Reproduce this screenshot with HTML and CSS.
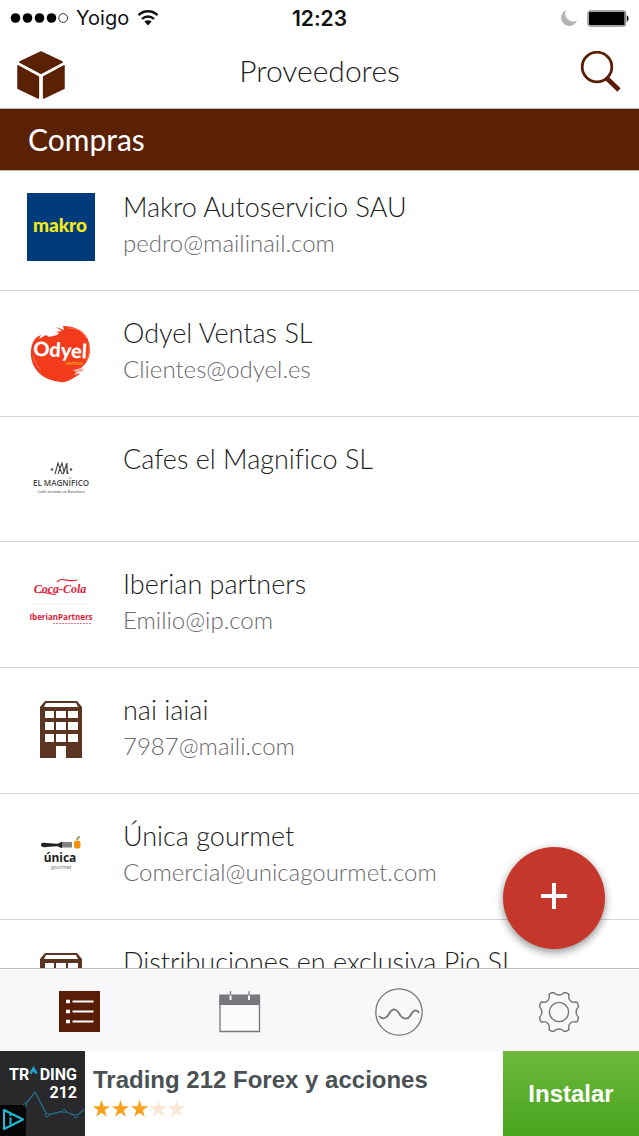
FILE: index.html
```html
<!DOCTYPE html>
<html lang="es">
<head>
<meta charset="utf-8">
<meta name="viewport" content="width=device-width, initial-scale=1">
<title>Proveedores</title>
<link rel="stylesheet" href="styles.css">
</head>
<body>
<div class="app">
  <div class="status">
    <div class="status-left">
      <svg class="signal" width="58" height="12" viewBox="0 0 58 12" aria-hidden="true"><circle cx="5.500" cy="6" r="4.800"/><circle cx="17.500" cy="6" r="4.800"/><circle cx="29.500" cy="6" r="4.800"/><circle cx="41.500" cy="6" r="4.800"/><circle cx="53.200" cy="6" r="4.400" fill="none" stroke="#333" stroke-width="1"/></svg>
      <span class="carrier">Yoigo</span>
      <svg class="wifi" width="22" height="18" viewBox="0 0 22 18" aria-hidden="true"><g fill="none" stroke="#111" stroke-width="2.400"><path d="M1.500 6.200a13.500 13.500 0 0 1 19 0"/><path d="M5 10a8.600 8.600 0 0 1 12 0"/></g><path d="M7.400 12.600a5.200 5.200 0 0 1 7.200 0L11 16.500z" fill="#111"/></svg>
    </div>
    <time class="clock">12:23</time>
    <div class="status-right">
      <svg width="18" height="18" viewBox="0 0 18 18" aria-hidden="true"><path d="M6 1.200A8.200 8.200 0 1 0 17 11.600 8 8 0 0 1 6 1.200z" fill="#b3b3b6"/></svg>
      <svg width="42" height="17" viewBox="0 0 42 17" aria-hidden="true"><rect x="1" y="1" width="37.500" height="15" rx="2.500" fill="#fff" stroke="#8b8b8b" stroke-width="1.400"/><rect x="2" y="2" width="35.500" height="13" rx="1" fill="#000"/><path d="M39.800 5.500c2.400 0 2.400 6 0 6z" fill="#111"/></svg>
    </div>
  </div>

  <header class="topbar">
    <button class="icon-btn" type="button" aria-label="Inicio">
      <svg width="48" height="48" viewBox="0 0 48 48" aria-hidden="true"><g fill="#5a2105" stroke="#5a2105" stroke-width="1.500" stroke-linejoin="round"><path d="M24 1 45.200 11 24 22.400 2.800 11z"/><path d="M1 14.800 21.400 26v21L1 37.200z"/><path d="M47 14.800 26.600 26v21L47 37.200z"/></g></svg>
    </button>
    <h1 class="title">Proveedores</h1>
    <button class="icon-btn icon-btn-end" type="button" aria-label="Buscar">
      <svg width="42" height="42" viewBox="0 0 42 42" aria-hidden="true"><g fill="none" stroke="#5a1d08"><circle cx="17" cy="16" r="14.800" stroke-width="2.800"/><path d="M26 26.500 39 39" stroke-width="4.600"/></g></svg>
    </button>
  </header>

  <main class="content">
    <h2 class="section">Compras</h2>
    <ul class="list">
      <li class="item">
        <svg class="logo" viewBox="0 0 68 68" role="img" aria-label="makro"><rect width="68" height="68" fill="#003c7d"/><text x="33" y="38.500" text-anchor="middle" class="lg-makro">makro</text></svg>
        <div class="info"><h3 class="name">Makro Autoservicio SAU</h3><p class="mail">pedro@mailinail.com</p></div>
      </li>
      <li class="item">
        <svg class="logo" viewBox="0 0 68 68" role="img" aria-label="Odyel"><path d="M4 31C5 23 8 18 14 16l-2 4 7-4 3 2 8-2 2-2-3-1 6-1-6-4 8 3-1-4c9 0 18 3 23 10 3 4 4 10 4 16-1 7-4 12-10 17l4-1-7 5 3 1-8 5c-4 2-8 4-12 3-7-1-14-3-20-8C7 49 3 42 4 31z" fill="#f23a1d"/><path d="M41 9c9 0 15 3 18 10M48 56l8-5M6 36c1 6 4 11 8 15M62 26c1 7-1 13-3 17" fill="none" stroke="#ff7b55" stroke-width="1"/><path d="M46 51l12-3-6 4 4 1-9 3 2-3z" fill="#fff" opacity=".6"/><text x="6" y="38" class="lg-odyel" transform="rotate(3 30 38)">Odyel</text><text x="38" y="46" class="lg-odyel2">ventas</text></svg>
        <div class="info"><h3 class="name">Odyel Ventas SL</h3><p class="mail">Clientes@odyel.es</p></div>
      </li>
      <li class="item">
        <svg class="logo" viewBox="0 0 68 68" role="img" aria-label="El Magnífico"><path d="M28 29l3-11 4 11M31 29l4-11 2 9 3-9v11M36 29l3-8M39 19l2 10" fill="none" stroke="#444" stroke-width="1.100"/><circle cx="25" cy="24.500" r="1.300" fill="#555"/><circle cx="44" cy="24.500" r="1.300" fill="#555"/><text x="34" y="41" text-anchor="middle" class="lg-mag">EL MAGNÍFICO</text><text x="34" y="48" text-anchor="middle" class="lg-mag2">Cafés tostados en Barcelona</text></svg>
        <div class="info"><h3 class="name">Cafes el Magnifico SL</h3></div>
      </li>
      <li class="item">
        <svg class="logo" viewBox="0 0 68 68" role="img" aria-label="Coca-Cola Iberian Partners"><text x="33" y="23" text-anchor="middle" class="lg-coca">Coca-Cola</text><path d="M12 23c5-3 11 3 17 1M30 12c5-6 11 1 20-2" fill="none" stroke="#e0223a" stroke-width="1.200"/><path d="M5 34h58" stroke="#eee"/><text x="34" y="50" text-anchor="middle" class="lg-iberian">IberianPartners</text><path d="M26 53.500h38" stroke="#e87883" stroke-dasharray="2 1"/></svg>
        <div class="info"><h3 class="name">Iberian partners</h3><p class="mail">Emilio@ip.com</p></div>
      </li>
      <li class="item">
        <svg class="logo" viewBox="0 0 68 68" aria-hidden="true"><path fill-rule="evenodd" fill="#5b3521" d="M18 5h32l5 6v51H39V50H29v12H13V11zM19 7l-2 4h34l-2-4zM18 15v7h9v-7zm11 0v7h10v-7zm12 0v7h10v-7zM18 26v8h9v-8zm11 0v8h10v-8zm12 0v8h10v-8zM18 38v8h9v-8zm11 0v8h10v-8zm12 0v8h10v-8z"/></svg>
        <div class="info"><h3 class="name">nai iaiai</h3><p class="mail">7987@maili.com</p></div>
      </li>
      <li class="item">
        <svg class="logo" viewBox="0 0 68 68" role="img" aria-label="única gourmet"><path d="M14 22.500c0-2 2-2 5-1.500l11 .8c2 0 3-1.800 5-1.800v6c-2 0-3-1.800-5-1.800l-11 .8c-3 .5-5 0-5-2.500z" fill="#222"/><path d="M35 20h10v5.500H35z" fill="#777"/><path d="M36 21.500h9M36 24h9" stroke="#aaa" stroke-width=".6"/><rect x="47" y="18.500" width="6.500" height="8" rx="2.500" fill="#f6920f"/><path d="M50 18c0-2 1-3 3-3" fill="none" stroke="#739b2e" stroke-width="1.400"/><text x="33" y="40" text-anchor="middle" class="lg-unica">única</text><text x="34" y="47" text-anchor="middle" class="lg-unica2">gourmet</text></svg>
        <div class="info"><h3 class="name">Única gourmet</h3><p class="mail">Comercial@unicagourmet.com</p></div>
      </li>
      <li class="item">
        <svg class="logo" viewBox="0 0 68 68" aria-hidden="true"><path fill-rule="evenodd" fill="#5b3521" d="M18 5h32l5 6v51H39V50H29v12H13V11zM19 7l-2 4h34l-2-4zM18 15v7h9v-7zm11 0v7h10v-7zm12 0v7h10v-7zM18 26v8h9v-8zm11 0v8h10v-8zm12 0v8h10v-8zM18 38v8h9v-8zm11 0v8h10v-8zm12 0v8h10v-8z"/></svg>
        <div class="info"><h3 class="name">Distribuciones en exclusiva Pio SL</h3></div>
      </li>
    </ul>
    <button class="fab" type="button" aria-label="Añadir proveedor">
      <svg width="26" height="26" viewBox="0 0 26 26" aria-hidden="true"><path d="M13 0v26M0 13h26" stroke="#fff" stroke-width="4"/></svg>
    </button>
  </main>

  <nav class="tabs" aria-label="Principal">
    <button class="tab" type="button" aria-label="Lista" aria-current="page"><svg width="48" height="48" viewBox="0 0 48 48" aria-hidden="true"><path d="M3 3h41v41H3z" fill="#5a1d05"/><path d="M16.500 13.500h21M16.500 23.500h21M16.500 33.500h21" stroke="#fff" stroke-width="2"/><path d="M10 13.500h4M10 23.500h4M10 33.500h4" stroke="#fff" stroke-width="3.600"/></svg></button>
    <button class="tab" type="button" aria-label="Calendario"><svg width="48" height="48" viewBox="0 0 48 48" aria-hidden="true"><path d="M4 8h39.500v35.500H4z" fill="#fbfafc" stroke="#77767a" stroke-width="1.300"/><path d="M3.400 6.500H44v10.500H3.400z" fill="#77767a"/><path d="M14.500 3v5M33 3v5" stroke="#77767a" stroke-width="1.200"/><path d="M14.500 7.500v4.500M33 7.500v4.500" stroke="#fff" stroke-width="2"/></svg></button>
    <button class="tab" type="button" aria-label="Estadísticas"><svg width="48" height="48" viewBox="0 0 48 48" aria-hidden="true"><g fill="none" stroke="#77767a" stroke-width="1.300"><circle cx="24" cy="24" r="23.200"/><path stroke-width="1.800" d="M4 28c3 3.500 6.500 3 9-.5 4-8 8-8 12-.5 4 5 8 5 11-.5 2.500-5 6-5.500 8-1.500"/></g></svg></button>
    <button class="tab" type="button" aria-label="Ajustes"><svg width="48" height="48" viewBox="-24 -24 48 48" aria-hidden="true"><g fill="none" stroke="#77767a" stroke-width="1.400" stroke-linejoin="round"><circle r="9.600"/><path d="M19.500 5.300Q18.500 10.500 17 10A5.500 5.500 0 0 0 10 17Q10.500 18.500 5.300 19.500A7 7 0 0 0-5.300 19.500Q-10.500 18.500-10 17A5.500 5.500 0 0 0-17 10Q-18.500 10.500-19.500 5.300A7 7 0 0 0-19.500-5.300Q-18.500-10.500-17-10A5.500 5.500 0 0 0-10-17Q-10.500-18.500-5.300-19.500A7 7 0 0 0 5.300-19.500Q10.500-18.500 10-17A5.500 5.500 0 0 0 17-10Q18.500-10.500 19.500-5.300A7 7 0 0 0 19.500 5.300z"/></g></svg></button>
  </nav>

  <aside class="ad" aria-label="Anuncio">
    <svg class="ad-logo" viewBox="0 0 85 85" role="img" aria-label="Trading 212"><rect width="85" height="85" fill="#29282a"/><path d="M20 57l5-3 10-13 12 23 17-4 12 5 9-7" fill="none" stroke="#256f88" stroke-width="1.300"/><g fill="#29282a" stroke="#256f88"><circle cx="25" cy="54" r="1.800"/><circle cx="47" cy="64" r="1.800"/><circle cx="64" cy="60" r="1.800"/><circle cx="76" cy="65" r="1.800"/></g><text x="9" y="29" class="lg-trading">TR</text><path d="M30.500 22.500l3-5 3 5" fill="none" stroke="#1ea5d8" stroke-width="2.600"/><text x="77" y="29" text-anchor="end" class="lg-trading">DING</text><text x="77" y="47" text-anchor="end" class="lg-trading">212</text><path d="M0 54h21q5 0 5 5v26H0z" fill="#060606"/><path d="M4 59l19 9.500L4 78z" fill="none" stroke="#1dbada" stroke-width="2" stroke-linejoin="round"/><path d="M10.500 66.500v7M10.500 63v2" stroke="#1dbada" stroke-width="2"/></svg>
    <div class="ad-body">
      <a class="ad-title" href="#">Trading 212 Forex y acciones</a>
      <svg class="stars" width="92" height="18" viewBox="0 0 92 18" role="img" aria-label="3 de 5 estrellas"><defs><path id="star" d="M8.500 0l2.100 6.200h6.400l-5.200 4 2 6.500-5.300-4-5.300 4 2-6.500L0 6.200h6.400z"/></defs><g fill="#f9a11b"><use href="#star"/><use href="#star" x="19"/><use href="#star" x="38"/></g><g fill="#fae6d4"><use href="#star" x="57"/><use href="#star" x="75"/></g></svg>
    </div>
    <button class="install" type="button">Instalar</button>
  </aside>
</div>
</body>
</html>
```
FILE: styles.css
```css
* { box-sizing: border-box; }
body, h1, h2, h3, p, ul { margin: 0; padding: 0; }
body { background: #fff; color: #222; font-family: Lato, "Open Sans", sans-serif; font-weight: 300; font-variant-ligatures: none; }
button { border: 0; padding: 0; background: none; font: inherit; color: inherit; cursor: pointer; }
svg { display: block; flex: none; }

.app { display: flex; flex-direction: column; height: 100vh; }

.status { display: grid; grid-template-columns: 1fr auto 1fr; align-items: center; height: 36px; padding: 0 10px; font-family: Inter, sans-serif; font-size: 20px; font-weight: 400; color: #111; }
.status-left { display: flex; align-items: center; gap: 8px; }
.status-right { display: flex; align-items: center; justify-content: flex-end; gap: 9px; }
.clock { font-size: 21px; font-weight: 600; }

.topbar { display: grid; grid-template-columns: 1fr auto 1fr; align-items: start; height: 73px; padding: 15px 17px 0; border-bottom: 1px solid #bbb; }
.icon-btn { display: flex; justify-self: start; }
.icon-btn-end { justify-self: end; }
.title { font-size: 30px; line-height: 38px; font-weight: 300; }

.content { position: relative; flex: 1; min-height: 0; overflow: hidden; }
.section { padding: 0 28px; border-bottom: 1px solid #c8b8b0; background: #5a2105; color: #fff; font-size: 30px; line-height: 61px; font-weight: 400; }
.list { list-style: none; }
.item { display: flex; gap: 28px; height: 126px; padding: 28px 27px 0; border-bottom: 1px solid #d5d3d8; }
.item:first-child { height: 120px; padding-top: 22px; }
.item:nth-child(3) { height: 125px; }
.logo { width: 68px; height: 68px; }
.info { min-width: 0; }
.name { font-size: 27px; line-height: 28px; font-weight: 300; white-space: nowrap; }
.mail { margin-top: 8px; color: #6b6a70; font-size: 24px; line-height: 28px; }

.fab { position: absolute; right: 34px; bottom: 19px; display: flex; align-items: center; justify-content: center; width: 102px; height: 102px; padding-bottom: 5px; border-radius: 50%; background: #c5372b; box-shadow: 0 3px 8px rgba(0, 0, 0, .45); }

.tabs { display: grid; grid-template-columns: repeat(4, 1fr); height: 83px; padding-top: 4px; border-top: 1px solid #bdbcc0; background: #f8f7f9; }
.tab { display: flex; align-items: center; justify-content: center; }

.ad { display: flex; height: 85px; background: #fff; font-family: "Liberation Sans", Arial, sans-serif; font-weight: 700; }
.ad-logo { width: 85px; height: 85px; }
.ad-body { flex: 1; min-width: 0; padding: 15px 0 0 8px; }
.ad-title { display: block; color: #495153; font-size: 24px; line-height: 28px; text-decoration: none; white-space: nowrap; }
.stars { margin-top: 6px; }
.install { width: 136px; background: linear-gradient(#6db83c, #48a51d); color: #fff; font-size: 24px; }

.lg-makro { fill: #f6eb16; font: 900 19px Lato, sans-serif; }
.lg-odyel { fill: #fff; font: 900 20px Lato, sans-serif; }
.lg-odyel2 { fill: #f9a11b; font: 700 6px Lato, sans-serif; }
.lg-mag { fill: #444; font: 600 8px "Open Sans", sans-serif; }
.lg-mag2 { fill: #555; font: italic 400 4px Lato, sans-serif; }
.lg-coca { fill: #e0223a; font: italic 700 12px "Liberation Serif", serif; }
.lg-iberian { fill: #e0223a; font: 700 8px "Open Sans", sans-serif; }
.lg-unica { fill: #222; font: 700 12px "Noto Sans", sans-serif; }
.lg-unica2 { fill: #777; font: 400 5px "Noto Sans", sans-serif; }
.lg-trading { fill: #fff; font: 700 16px Roboto, sans-serif; }
```
